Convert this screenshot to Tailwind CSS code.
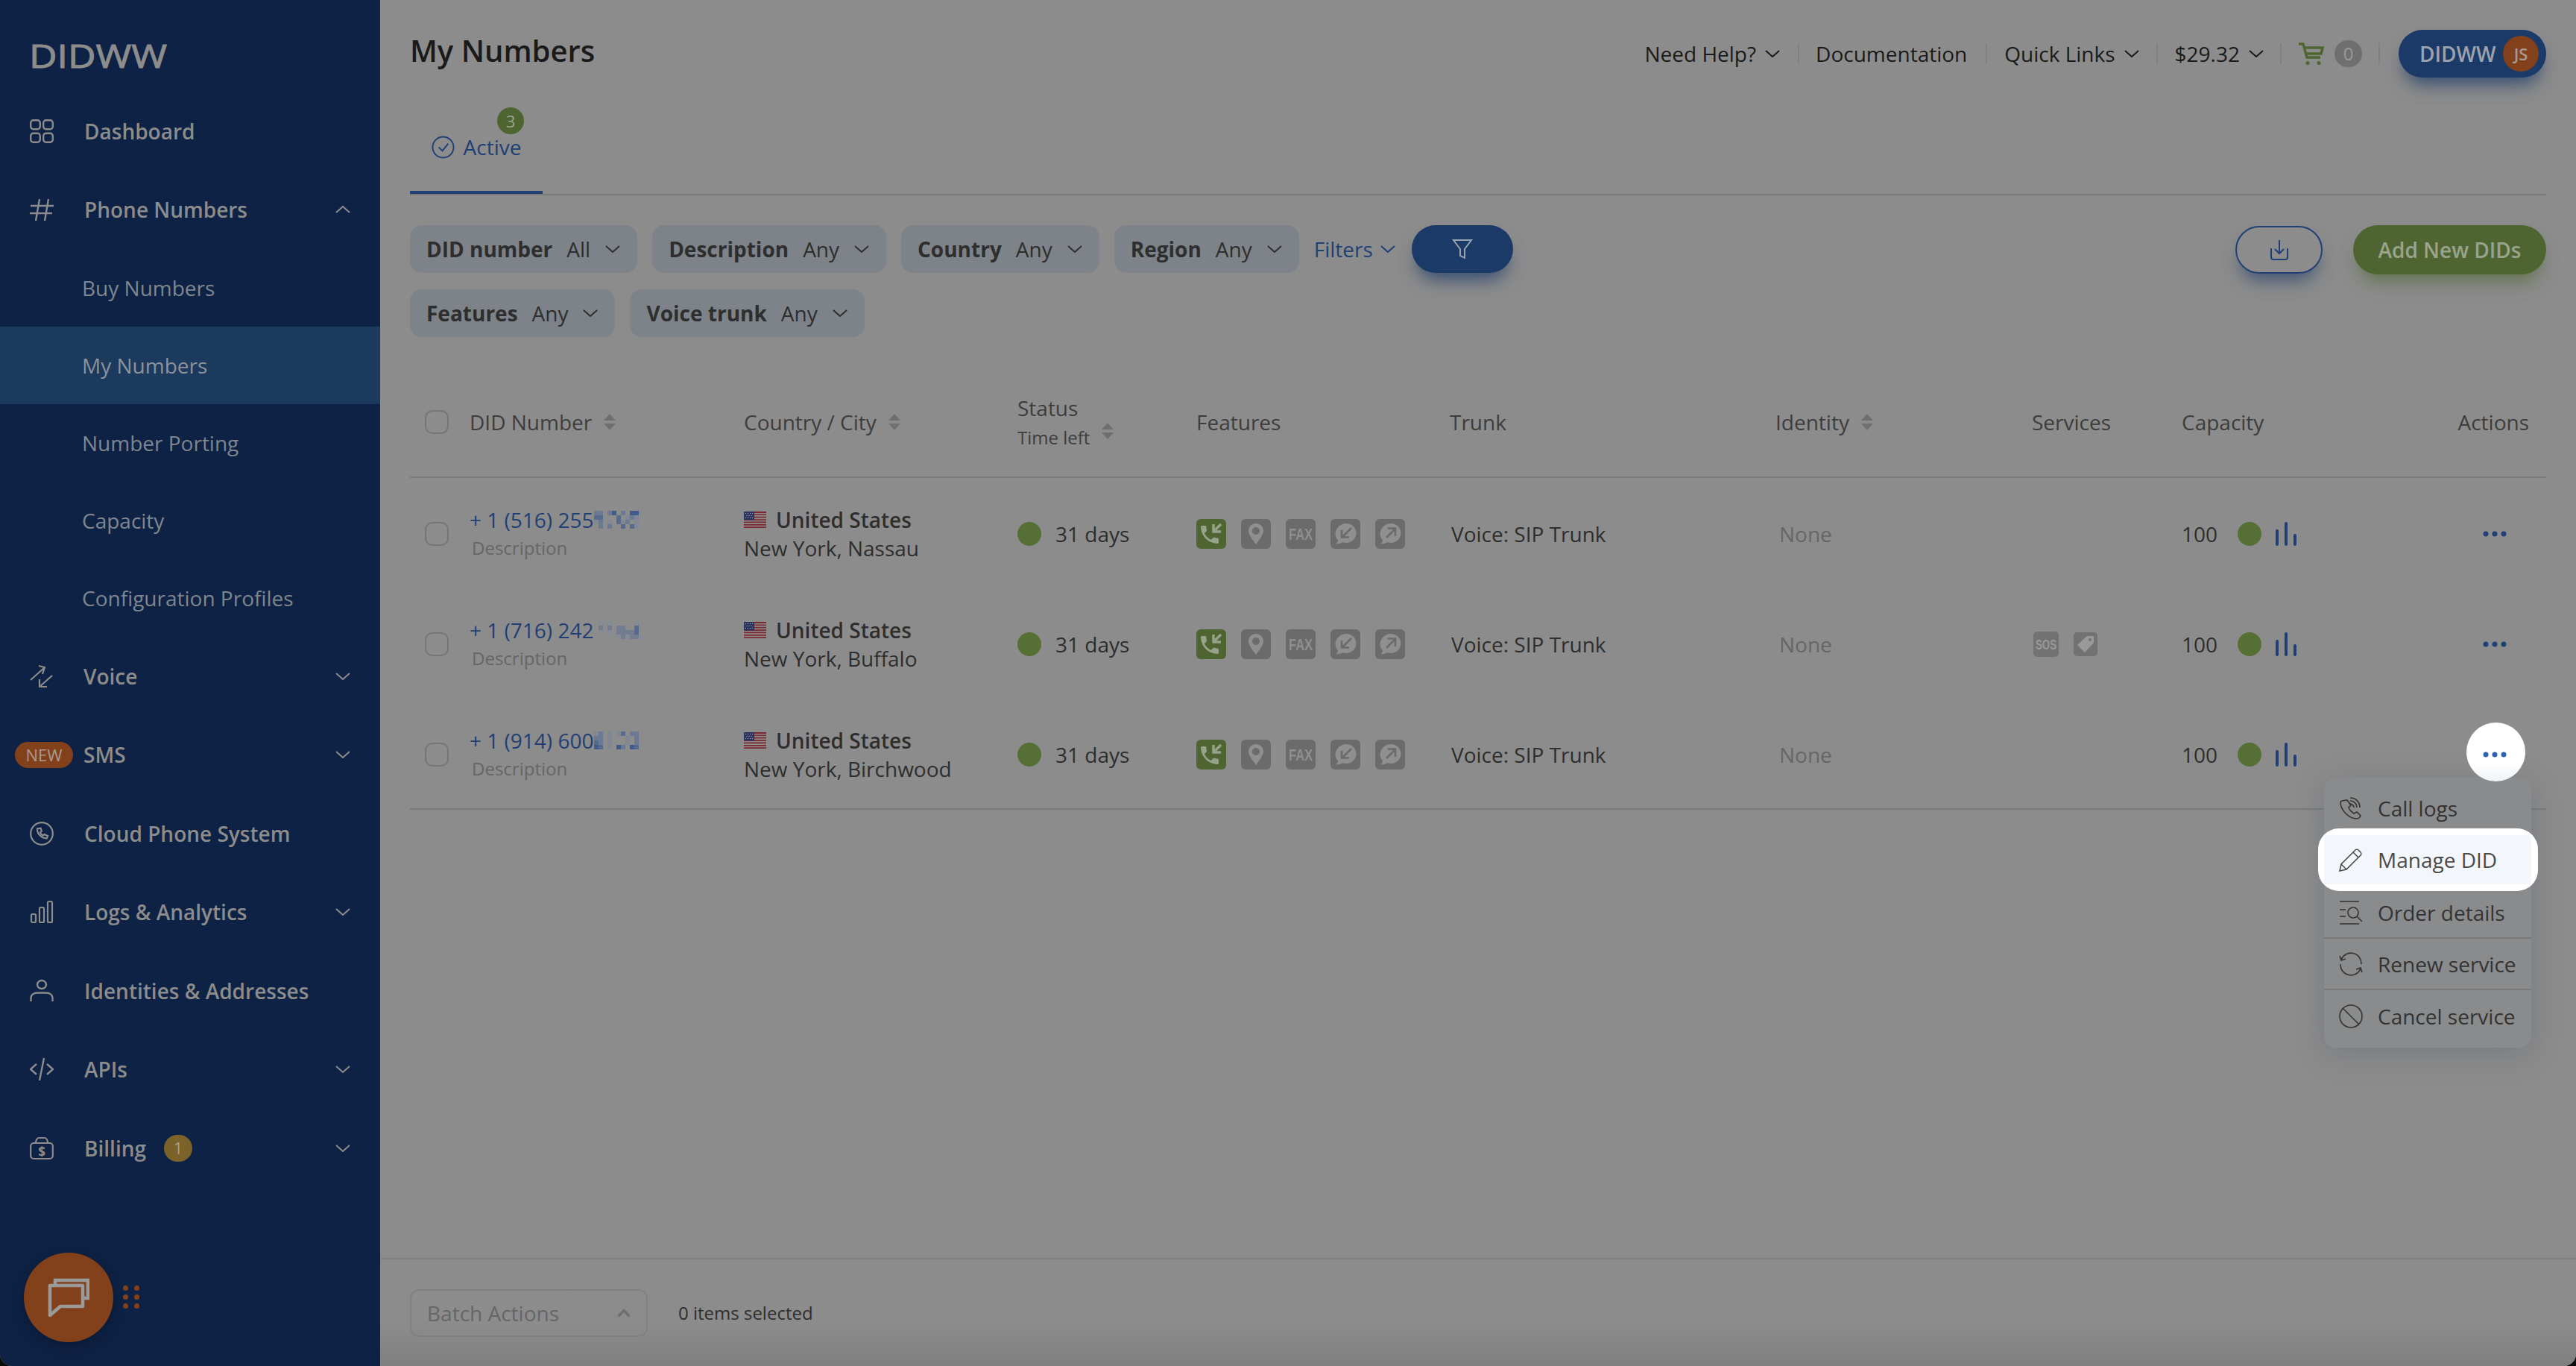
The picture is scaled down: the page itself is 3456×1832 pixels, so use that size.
<!DOCTYPE html>
<html lang="en">
<head>
  <meta charset="UTF-8" />
  <title>My Numbers</title>
  <script src="https://cdn.jsdelivr.net/npm/@tailwindcss/browser@4"></script>
</head>
<body class="bg-[#0a0a0a] font-['Open_Sans',sans-serif]">
  <!-- shared icons -->
  <svg class="hidden">
    <symbol id="chev-down" viewBox="0 0 20 10"><path d="M1 1l9 8 9-8" fill="none" stroke="currentColor" stroke-width="2"/></symbol>
    <symbol id="sort" viewBox="0 0 16 22"><path d="M8 0l8 9H0zM8 22l-8-9h16z" fill="#6f6f6f"/></symbol>
    <symbol id="flag" viewBox="0 0 30 22">
      <rect width="30" height="22" fill="#8c8c8c"/>
      <path d="M0 0h30v2H0zM0 3.4h30v1.7H0zM0 6.8h30v1.7H0zM0 10.2h30v1.7H0zM0 13.6h30v1.7H0zM0 17h30v1.7H0zM0 20.2h30V22H0z" fill="#7c2830"/>
      <rect width="14" height="11.5" fill="#2c3560"/>
      <path d="M2 2h1v1H2zM5 2h1v1H5zM8 2h1v1H8zM11 2h1v1h-1zM3.500 5h1v1h-1zM6.500 5h1v1h-1zM9.500 5h1v1h-1zM2 8h1v1H2zM5 8h1v1H5zM8 8h1v1H8zM11 8h1v1h-1z" fill="#b5b5b5"/>
    </symbol>
    <symbol id="f-call" viewBox="0 0 40 40">
      <rect width="40" height="40" rx="6" fill="#4f6531"/>
      <path transform="translate(2 5) scale(1.33)" d="M6.620 10.790c1.440 2.830 3.760 5.140 6.590 6.590l2.200-2.200c.27-.27.67-.36 1.020-.24 1.120.37 2.330.57 3.570.57.55 0 1 .45 1 1V20c0 .55-.45 1-1 1-9.390 0-17-7.610-17-17 0-.55.45-1 1-1h3.500c.55 0 1 .45 1 1 0 1.250.2 2.450.57 3.570.11.35.03.74-.25 1.020l-2.200 2.200z" fill="#98a28a"/>
      <path d="M33 7l-9 9M23 7v10h10" fill="none" stroke="#98a28a" stroke-width="3.400"/>
    </symbol>
    <symbol id="f-pin" viewBox="0 0 40 40">
      <rect width="40" height="40" rx="6" fill="#6b6b6b"/>
      <path d="M20 6c5.500 0 10 4.300 10 9.700 0 5.300-5.500 12-10 18.300-4.500-6.300-10-13-10-18.300C10 10.300 14.500 6 20 6z" fill="#8f8f8f"/>
      <circle cx="20" cy="16" r="5" fill="#6b6b6b"/>
    </symbol>
    <symbol id="f-fax" viewBox="0 0 40 40">
      <rect width="40" height="40" rx="6" fill="#6b6b6b"/>
      <text x="4" y="28" textLength="32" lengthAdjust="spacingAndGlyphs" font-family="Liberation Sans" font-weight="700" font-size="22" fill="#8f8f8f">FAX</text>
    </symbol>
    <symbol id="f-in" viewBox="0 0 40 40">
      <rect width="40" height="40" rx="6" fill="#6b6b6b"/>
      <path d="M21 6c7.500 0 13.500 5.700 13.500 13S28.500 32 21 32c-1.600 0-3.200-.3-4.700-.8-2.700 1.500-5.500 2.200-9.300 2.300 1.700-1.500 2.800-3.300 3.200-5.100-2.500-2.400-3.700-5.700-3.700-9.400C7.500 11.700 13.500 6 21 6z" fill="#8f8f8f"/>
      <path d="M28 12l-12 12M15 15v9.500h10" fill="none" stroke="#6b6b6b" stroke-width="2.600"/>
    </symbol>
    <symbol id="f-out" viewBox="0 0 40 40">
      <rect width="40" height="40" rx="6" fill="#6b6b6b"/>
      <path d="M21 6c7.500 0 13.500 5.700 13.500 13S28.500 32 21 32c-1.600 0-3.200-.3-4.700-.8-2.700 1.500-5.500 2.200-9.300 2.300 1.700-1.500 2.800-3.300 3.200-5.100-2.500-2.400-3.700-5.700-3.700-9.400C7.500 11.700 13.500 6 21 6z" fill="#8f8f8f"/>
      <path d="M15 25l12-12M16.500 12.500H27V23" fill="none" stroke="#6b6b6b" stroke-width="2.600"/>
    </symbol>
    <symbol id="bars" viewBox="0 0 28 32"><path d="M2 30V12M14 30V2M26 30V18" fill="none" stroke="#1f3f75" stroke-width="4" stroke-linecap="round"/></symbol>
    <symbol id="dots" viewBox="0 0 32 8"><circle cx="4" cy="4" r="3.500" fill="currentColor"/><circle cx="16" cy="4" r="3.500" fill="currentColor"/><circle cx="28" cy="4" r="3.500" fill="currentColor"/></symbol>
  </svg>

  <div class="relative flex w-[3456px] h-[1832px] overflow-hidden rounded-b-[16px] bg-[#8c8c8c]">
    <!-- sidebar -->
    <aside class="w-[510px] shrink-0 bg-[#0e2245] text-[#8c8c8c] text-[28px] font-semibold">
      <div class="h-[123px] pl-[39px] pt-[54px]">
        <svg class="overflow-visible" width="185" height="40" viewBox="0 0 185 40"><text x="0" y="37" textLength="185" lengthAdjust="spacingAndGlyphs" font-family="Open Sans" font-weight="400" font-size="44.500" fill="#8c8c8c" stroke="#8c8c8c" stroke-width="1">DIDWW</text></svg>
      </div>
      <a class="flex items-center h-[105px] pl-[40px] pr-[40px]">
        <svg class="w-[32px] h-[32px] mr-[41px]" viewBox="0 0 32 32" fill="none" stroke="currentColor" stroke-width="2.400"><rect x="1.200" y="1.200" width="12.600" height="12" rx="3.500"/><rect x="18.200" y="1.200" width="12.600" height="12" rx="3.500"/><rect x="1.200" y="18.800" width="12.600" height="12" rx="3.500"/><rect x="18.200" y="18.800" width="12.600" height="12" rx="3.500"/></svg>
        Dashboard
      </a>
      <a class="flex items-center h-[106px] pl-[40px] pr-[40px]">
        <svg class="w-[32px] h-[32px] mr-[41px]" viewBox="0 0 32 32" fill="none" stroke="currentColor" stroke-width="2.400"><path d="M1 11h31M0 21h30M13 2L8 31M25 2l-5 29"/></svg>
        Phone Numbers
        <svg class="ml-auto w-[20px] h-[10px] rotate-180"><use href="#chev-down"/></svg>
      </a>
      <div class="font-normal text-[#7f868f]">
        <a class="flex items-center h-[104px] pl-[110px]">Buy Numbers</a>
        <a class="flex items-center h-[104px] pl-[110px] bg-[#1c3a5e] text-[#8a929c]">My Numbers</a>
        <a class="flex items-center h-[104px] pl-[110px]">Number Porting</a>
        <a class="flex items-center h-[104px] pl-[110px]">Capacity</a>
        <a class="flex items-center h-[104px] pl-[110px]">Configuration Profiles</a>
      </div>
      <a class="flex items-center h-[105.500px] pl-[40px] pr-[40px]">
        <svg class="w-[32px] h-[32px] mr-[40px]" viewBox="0 0 32 32" fill="none" stroke="currentColor" stroke-width="2.200"><path d="M1 21L20 4M12 2l8 2-3 9M30 15L13 30M13 20v10h10"/></svg>
        Voice
        <svg class="ml-auto w-[20px] h-[10px]"><use href="#chev-down"/></svg>
      </a>
      <a class="flex items-center h-[105.500px] pl-[20px] pr-[40px]">
        <span class="w-[78px] h-[35px] mr-[14px] rounded-full bg-[#83411b] flex items-center justify-center text-[22px] text-[#a89a8e] font-normal">NEW</span>
        SMS
        <svg class="ml-auto w-[20px] h-[10px]"><use href="#chev-down"/></svg>
      </a>
      <a class="flex items-center h-[105.500px] pl-[40px] pr-[40px]">
        <svg class="w-[32px] h-[32px] mr-[41px]" viewBox="0 0 32 32" fill="none" stroke="currentColor" stroke-width="2.200"><circle cx="16" cy="16" r="14.800"/><path d="M10 9.500c-.5 6 5 12.500 12.500 13l1.500-3.500-4.500-2-2 1.500c-1.800-1-3-2.500-3.500-4.200l1.800-1.600-1.200-4z"/></svg>
        Cloud Phone System
      </a>
      <a class="flex items-center h-[105.500px] pl-[40px] pr-[40px]">
        <svg class="w-[32px] h-[32px] mr-[41px]" viewBox="0 0 32 32" fill="none" stroke="currentColor" stroke-width="2.200"><rect x="2" y="19" width="6" height="11" rx="1.500"/><rect x="13" y="10" width="6" height="20" rx="1.500"/><rect x="24" y="2" width="6" height="28" rx="1.500"/></svg>
        Logs &amp; Analytics
        <svg class="ml-auto w-[20px] h-[10px]"><use href="#chev-down"/></svg>
      </a>
      <a class="flex items-center h-[105.500px] pl-[40px] pr-[40px]">
        <svg class="w-[32px] h-[32px] mr-[41px]" viewBox="0 0 32 32" fill="none" stroke="currentColor" stroke-width="2.400"><ellipse cx="16" cy="7.500" rx="6" ry="5.500"/><path d="M1.500 30v-4c0-5 4-7.500 8.500-7.500h12c4.500 0 8.500 2.500 8.500 7.500v4"/></svg>
        Identities &amp; Addresses
      </a>
      <a class="flex items-center h-[105.500px] pl-[40px] pr-[40px]">
        <svg class="w-[32px] h-[32px] mr-[41px]" viewBox="0 0 32 32" fill="none" stroke="currentColor" stroke-width="2.400"><path d="M9 9l-8 7 8 7M23 9l8 7-8 7M19 1l-6 30"/></svg>
        APIs
        <svg class="ml-auto w-[20px] h-[10px]"><use href="#chev-down"/></svg>
      </a>
      <a class="flex items-center h-[105.500px] pl-[40px] pr-[40px]">
        <svg class="w-[32px] h-[32px] mr-[41px]" viewBox="0 0 32 32" fill="none" stroke="currentColor" stroke-width="2.200"><rect x="1.200" y="9" width="29.600" height="21" rx="4"/><path d="M8 9c0-4 2-7 4-7h8c2 0 4 3 4 7"/><text x="16" y="27" text-anchor="middle" font-size="17" font-weight="700" fill="currentColor" stroke="none">$</text></svg>
        Billing
        <span class="ml-[24px] w-[38px] h-[36px] rounded-full bg-[#7a6228] flex items-center justify-center text-[22px] text-[#a89e84] font-normal">1</span>
        <svg class="ml-auto w-[20px] h-[10px]"><use href="#chev-down"/></svg>
      </a>
    </aside>

    <!-- main -->
    <main class="flex-1 flex flex-col min-w-0">
      <div class="px-[40px]">
        <header class="flex items-center h-[64px] mt-[40px] text-[28px] text-[#1a1a1a]">
          <h1 class="text-[40px] font-semibold leading-none -mt-[8px]">My Numbers</h1>
          <div class="ml-auto flex items-center">
            <span class="flex items-center gap-[12px]">Need Help?<svg class="w-[20px] h-[10px]"><use href="#chev-down"/></svg></span>
            <span class="w-[2px] h-[28px] bg-[#808080] ml-[24px] mr-[22px]"></span>
            <span>Documentation</span>
            <span class="w-[2px] h-[28px] bg-[#808080] ml-[25px] mr-[23px]"></span>
            <span class="flex items-center gap-[12px]">Quick Links<svg class="w-[20px] h-[10px]"><use href="#chev-down"/></svg></span>
            <span class="w-[2px] h-[28px] bg-[#808080] mx-[23px]"></span>
            <span class="flex items-center gap-[12px]">$29.32<svg class="w-[20px] h-[10px]"><use href="#chev-down"/></svg></span>
            <span class="w-[2px] h-[28px] bg-[#808080] mx-[22px]"></span>
            <svg class="w-[36px] h-[32px]" viewBox="0 0 36 32" fill="none" stroke="#4f6531" stroke-width="3.500"><path d="M1 3h6l5 18h18M8 8h25l-2 8H11"/><circle cx="13" cy="28.500" r="2.500" fill="#4f6531" stroke="none"/><circle cx="28" cy="28.500" r="2.500" fill="#4f6531" stroke="none"/></svg>
            <span class="ml-[13px] w-[37px] h-[36px] rounded-full bg-[#6f6f6f] flex items-center justify-center text-[24px] text-[#9a9a9a]">0</span>
            <span class="w-[2px] h-[28px] bg-[#808080] ml-[22px] mr-[25px]"></span>
            <span class="w-[198px] h-[64px] rounded-full bg-[#1b3a68] shadow-[0_16px_24px_-8px_rgba(27,58,104,0.8)] flex items-center pl-[28px] pr-[10px] font-semibold text-[#9ba3ae]">
              DIDWW
              <span class="ml-auto w-[48px] h-[48px] rounded-full bg-[#83411b] flex items-center justify-center text-[22px] text-[#a89a8e] font-semibold">JS</span>
            </span>
          </div>
        </header>

        <div class="mt-[38px] border-b-2 border-[#7b7b7b]">
          <div class="relative w-[178px] h-[118px] pt-[34px] border-b-4 border-[#1f3f75] flex justify-center gap-[12px] text-[28px] text-[#1f3f75]">
            <svg class="w-[31px] h-[31px] mt-[6px]" viewBox="0 0 32 32" fill="none" stroke="currentColor" stroke-width="2"><circle cx="16" cy="16" r="14.500"/><path d="M10 16l5 5 8-10"/></svg>
            Active
            <span class="absolute left-[117px] top-[2px] w-[36px] h-[36px] rounded-full bg-[#4f6531] flex items-center justify-center text-[22px] text-[#9aa38c]">3</span>
          </div>
        </div>

        <!-- filters -->
        <div class="mt-[40px] flex items-start justify-between text-[28px]">
          <div class="flex flex-col gap-[22px]">
            <div class="flex items-center gap-[20px]">
              <span class="flex items-center h-[64px] pl-[22px] pr-[23px] rounded-[16px] bg-[#7d8388] text-[#2e2e2e]"><b class="font-bold mr-[19px]">DID number</b>All<svg class="ml-[20px] w-[20px] h-[10px]"><use href="#chev-down"/></svg></span>
              <span class="flex items-center h-[64px] pl-[22px] pr-[23px] rounded-[16px] bg-[#7d8388] text-[#2e2e2e]"><b class="font-bold mr-[19px]">Description</b>Any<svg class="ml-[20px] w-[20px] h-[10px]"><use href="#chev-down"/></svg></span>
              <span class="flex items-center h-[64px] pl-[22px] pr-[23px] rounded-[16px] bg-[#7d8388] text-[#2e2e2e]"><b class="font-bold mr-[19px]">Country</b>Any<svg class="ml-[20px] w-[20px] h-[10px]"><use href="#chev-down"/></svg></span>
              <span class="flex items-center h-[64px] pl-[22px] pr-[23px] rounded-[16px] bg-[#7d8388] text-[#2e2e2e]"><b class="font-bold mr-[19px]">Region</b>Any<svg class="ml-[20px] w-[20px] h-[10px]"><use href="#chev-down"/></svg></span>
              <span class="flex items-center gap-[10px] text-[#1f3f75]">Filters<svg class="w-[20px] h-[10px]"><use href="#chev-down"/></svg></span>
              <span class="ml-[2px] w-[136px] h-[64px] rounded-full bg-[#1b3a68] shadow-[0_16px_24px_-8px_rgba(27,58,104,0.8)] flex items-center justify-center">
                <svg class="w-[28px] h-[28px]" viewBox="0 0 28 28" fill="none" stroke="#9ba3ae" stroke-width="2"><path d="M2 2h24L17 14v12l-6-3v-9z"/></svg>
              </span>
            </div>
            <div class="flex items-center gap-[20px]">
              <span class="flex items-center h-[64px] pl-[22px] pr-[23px] rounded-[16px] bg-[#7d8388] text-[#2e2e2e]"><b class="font-bold mr-[19px]">Features</b>Any<svg class="ml-[20px] w-[20px] h-[10px]"><use href="#chev-down"/></svg></span>
              <span class="flex items-center h-[64px] pl-[22px] pr-[23px] rounded-[16px] bg-[#7d8388] text-[#2e2e2e]"><b class="font-bold mr-[19px]">Voice trunk</b>Any<svg class="ml-[20px] w-[20px] h-[10px]"><use href="#chev-down"/></svg></span>
            </div>
          </div>
          <div class="flex items-center gap-[41px]">
            <span class="w-[117px] h-[64px] rounded-full border-2 border-[#1f3f75] shadow-[0_16px_24px_-8px_rgba(27,58,104,0.7)] flex items-center justify-center">
              <svg class="w-[28px] h-[28px]" viewBox="0 0 28 28" fill="none" stroke="#1f3f75" stroke-width="2"><path d="M14 1v18M8 13l6 6 6-6M3 12v12c0 2 1 3 3 3h16c2 0 3-1 3-3V12"/></svg>
            </span>
            <span class="w-[259px] h-[66px] rounded-full bg-[#4f6531] shadow-[0_16px_24px_-8px_rgba(79,101,49,0.7)] flex items-center justify-center font-semibold text-[#9aa38c]">Add New DIDs</span>
          </div>
        </div>

        <!-- table -->
        <div class="mt-[41px] text-[28px] text-[#2e2e2e]">
          <div class="grid grid-cols-[80px_368px_367px_240px_340px_437px_344px_201px_200px_1fr] items-center h-[148px] border-b-2 border-[#7b7b7b] text-[#3d3d3d]">
            <span class="ml-[20px] w-[32px] h-[32px] rounded-[10px] border-2 border-[#757575]"></span>
            <span class="flex items-center gap-[16px]">DID Number<svg class="w-[16px] h-[22px]"><use href="#sort"/></svg></span>
            <span class="flex items-center gap-[16px]">Country / City<svg class="w-[16px] h-[22px]"><use href="#sort"/></svg></span>
            <span class="flex items-center gap-[16px]"><span class="flex flex-col"><span class="leading-[38px]">Status</span><span class="text-[24px] leading-[34px] mt-[4px]">Time left</span></span><svg class="w-[16px] h-[22px] mt-[24px]"><use href="#sort"/></svg></span>
            <span>Features</span>
            <span>Trunk</span>
            <span class="flex items-center gap-[16px]">Identity<svg class="w-[16px] h-[22px]"><use href="#sort"/></svg></span>
            <span>Services</span>
            <span>Capacity</span>
            <span class="justify-self-end pr-[23px]">Actions</span>
          </div>

          <div class="grid grid-cols-[80px_368px_367px_240px_340px_437px_344px_201px_200px_1fr] items-center h-[148px] pt-[2px]">
            <span class="ml-[20px] w-[32px] h-[32px] rounded-[10px] border-2 border-[#757575]"></span>
            <span class="flex flex-col leading-[38px]">
              <span class="flex items-center text-[#1f3f75]">+ 1 (516) 255<svg class="w-[60px] h-[24px] ml-[1px]" viewBox="0 0 10 4" shape-rendering="crispEdges"><path d="M0 0h2v1H0zM3 0h1v1H3zM6 0h1v1H6zM8 1h1v1H8zM1 2h1v1H1zM7 2h1v1H7zM1 3h1v1H1zM3 3h1v1H3z" fill="#6b7a92"/><path d="M0 1h2v1H0zM5 1h1v2H5zM6 3h1v1H6zM8 3h1v1H8z" fill="#566a8c"/><path d="M4 0h1v1H4zM8 0h2v1H8z" fill="#3f5c8c"/><path d="M7 1h1v1H7zM9 1h1v1H9zM0 2h1v1H0zM3 2h1v1H3zM6 2h1v1H6zM9 2h1v2H9z" fill="#828893"/></svg></span>
              <span class="text-[24px] text-[#666] pl-[3px]">Description</span>
            </span>
            <span class="flex flex-col leading-[38px]">
              <span class="flex items-center font-semibold"><svg class="w-[30px] h-[22px] mr-[13px]"><use href="#flag"/></svg>United States</span>
              <span>New York, Nassau</span>
            </span>
            <span class="flex items-center gap-[19px]"><i class="w-[32px] h-[32px] rounded-full bg-[#556f34]"></i>31 days</span>
            <span class="flex gap-[20px]"><svg class="w-[40px] h-[40px]"><use href="#f-call"/></svg><svg class="w-[40px] h-[40px]"><use href="#f-pin"/></svg><svg class="w-[40px] h-[40px]"><use href="#f-fax"/></svg><svg class="w-[40px] h-[40px]"><use href="#f-in"/></svg><svg class="w-[40px] h-[40px]"><use href="#f-out"/></svg></span>
            <span class="pl-[2px]">Voice: SIP Trunk</span>
            <span class="pl-[5px] text-[#666]">None</span>
            <span></span>
            <span class="flex items-center">100<i class="ml-[27px] w-[32px] h-[32px] rounded-full bg-[#556f34]"></i><svg class="ml-[19px] w-[28px] h-[32px]"><use href="#bars"/></svg></span>
            <span class="justify-self-end pr-[53px] text-[#1f3f75]"><svg class="w-[32px] h-[8px]"><use href="#dots"/></svg></span>
          </div>

          <div class="grid grid-cols-[80px_368px_367px_240px_340px_437px_344px_201px_200px_1fr] items-center h-[148px] pt-[2px]">
            <span class="ml-[20px] w-[32px] h-[32px] rounded-[10px] border-2 border-[#757575]"></span>
            <span class="flex flex-col leading-[38px]">
              <span class="flex items-center text-[#1f3f75]">+ 1 (716) 242<svg class="w-[66px] h-[24px] ml-[1px]" viewBox="0 0 11 4" shape-rendering="crispEdges"><path d="M1 0h1v1H1zM3 0h1v1H3zM9 0h1v1H9zM1 2h1v1H1zM3 2h1v1H3zM5 3h1v1H5zM7 3h1v1H7zM10 3h1v1h-1z" fill="#858a95"/><path d="M1 1h1v1H1zM3 1h1v1H3zM5 1h2v1H5zM5 2h3v1H5zM6 3h1v1H6zM8 2h1v1H8zM8 3h2v1H8z" fill="#727d92"/><path d="M9 1h1v2H9z" fill="#566a8c"/></svg></span>
              <span class="text-[24px] text-[#666] pl-[3px]">Description</span>
            </span>
            <span class="flex flex-col leading-[38px]">
              <span class="flex items-center font-semibold"><svg class="w-[30px] h-[22px] mr-[13px]"><use href="#flag"/></svg>United States</span>
              <span>New York, Buffalo</span>
            </span>
            <span class="flex items-center gap-[19px]"><i class="w-[32px] h-[32px] rounded-full bg-[#556f34]"></i>31 days</span>
            <span class="flex gap-[20px]"><svg class="w-[40px] h-[40px]"><use href="#f-call"/></svg><svg class="w-[40px] h-[40px]"><use href="#f-pin"/></svg><svg class="w-[40px] h-[40px]"><use href="#f-fax"/></svg><svg class="w-[40px] h-[40px]"><use href="#f-in"/></svg><svg class="w-[40px] h-[40px]"><use href="#f-out"/></svg></span>
            <span class="pl-[2px]">Voice: SIP Trunk</span>
            <span class="pl-[5px] text-[#666]">None</span>
            <span class="flex items-center gap-[20px] pl-[2px]">
              <svg class="w-[34px] h-[34px]" viewBox="0 0 34 34"><rect width="34" height="34" rx="5" fill="#727272"/><text x="3" y="24" textLength="28" lengthAdjust="spacingAndGlyphs" font-family="Liberation Sans" font-weight="700" font-size="19" fill="#999">SOS</text></svg>
              <svg class="w-[32px] h-[32px]" viewBox="0 0 32 32"><rect width="32" height="32" rx="5" fill="#727272"/><path d="M18 5h8a1 1 0 0 1 1 1v8L15 27 5 17z" fill="#999"/><circle cx="22" cy="10" r="2" fill="#727272"/></svg>
            </span>
            <span class="flex items-center">100<i class="ml-[27px] w-[32px] h-[32px] rounded-full bg-[#556f34]"></i><svg class="ml-[19px] w-[28px] h-[32px]"><use href="#bars"/></svg></span>
            <span class="justify-self-end pr-[53px] text-[#1f3f75]"><svg class="w-[32px] h-[8px]"><use href="#dots"/></svg></span>
          </div>

          <div class="grid grid-cols-[80px_368px_367px_240px_340px_437px_344px_201px_200px_1fr] items-center h-[149px] pt-[2px] border-b-2 border-[#7b7b7b]">
            <span class="ml-[20px] w-[32px] h-[32px] rounded-[10px] border-2 border-[#757575]"></span>
            <span class="flex flex-col leading-[38px]">
              <span class="flex items-center text-[#1f3f75]">+ 1 (914) 600<svg class="w-[60px] h-[24px] ml-[1px]" viewBox="0 0 10 4" shape-rendering="crispEdges"><path d="M0 0h1v1H0zM3 0h1v4H3zM5 0h1v1H5zM7 1h1v2H7z" fill="#828893"/><path d="M1 0h1v3H1zM8 0h2v1H8zM0 1h1v1H0zM9 1h1v2H9zM6 3h1v1H6z" fill="#6b7a92"/><path d="M6 0h1v1H6zM0 2h1v1H0zM1 3h1v1H1zM9 3h1v1H9z" fill="#566a8c"/><path d="M0 3h1v1H0zM5 3h1v1H5zM8 3h1v1H8z" fill="#3f5c8c"/></svg></span>
              <span class="text-[24px] text-[#666] pl-[3px]">Description</span>
            </span>
            <span class="flex flex-col leading-[38px]">
              <span class="flex items-center font-semibold"><svg class="w-[30px] h-[22px] mr-[13px]"><use href="#flag"/></svg>United States</span>
              <span>New York, Birchwood</span>
            </span>
            <span class="flex items-center gap-[19px]"><i class="w-[32px] h-[32px] rounded-full bg-[#556f34]"></i>31 days</span>
            <span class="flex gap-[20px]"><svg class="w-[40px] h-[40px]"><use href="#f-call"/></svg><svg class="w-[40px] h-[40px]"><use href="#f-pin"/></svg><svg class="w-[40px] h-[40px]"><use href="#f-fax"/></svg><svg class="w-[40px] h-[40px]"><use href="#f-in"/></svg><svg class="w-[40px] h-[40px]"><use href="#f-out"/></svg></span>
            <span class="pl-[2px]">Voice: SIP Trunk</span>
            <span class="pl-[5px] text-[#666]">None</span>
            <span></span>
            <span class="flex items-center">100<i class="ml-[27px] w-[32px] h-[32px] rounded-full bg-[#556f34]"></i><svg class="ml-[19px] w-[28px] h-[32px]"><use href="#bars"/></svg></span>
            <span></span>
          </div>
        </div>
      </div>

      <!-- batch bar -->
      <footer class="mt-auto h-[145px] border-t-2 border-[#808080] px-[40px] flex items-center gap-[41px] bg-gradient-to-b from-[#8c8c8c] from-60% to-[#7f7f7f]">
        <span class="w-[319px] h-[64px] rounded-[12px] border-2 border-[#808080] flex items-center justify-between pl-[21px] pr-[21px] text-[28px] text-[#666]">
          Batch Actions
          <svg class="w-[18px] h-[12px]" viewBox="0 0 18 12" fill="none" stroke="#6f6f6f" stroke-width="3.500"><path d="M1.500 10.500L9 2.500l7.500 8"/></svg>
        </span>
        <span class="text-[24px] text-[#2e2e2e]">0 items selected</span>
      </footer>
    </main>

    <!-- chat launcher -->
    <div class="absolute left-[32px] top-[1680px] w-[120px] h-[120px] rounded-full bg-[#83411b] shadow-[0_6px_20px_rgba(0,0,0,0.25)] flex items-center justify-center">
      <svg class="w-[56px] h-[52px]" viewBox="0 0 56 52" fill="none" stroke="#9a9a9a" stroke-width="4.500"><path d="M10 8V3h44v24h-5"/><path d="M3 10h44v28H17L3 50z" stroke-linejoin="round"/></svg>
    </div>
    <div class="absolute left-[165px] top-[1724px] grid grid-cols-2 gap-x-[8px] gap-y-[5px]">
      <i class="w-[7px] h-[7px] rounded-full bg-[#83411b]"></i><i class="w-[7px] h-[7px] rounded-full bg-[#83411b]"></i>
      <i class="w-[7px] h-[7px] rounded-full bg-[#83411b]"></i><i class="w-[7px] h-[7px] rounded-full bg-[#83411b]"></i>
      <i class="w-[7px] h-[7px] rounded-full bg-[#83411b]"></i><i class="w-[7px] h-[7px] rounded-full bg-[#83411b]"></i>
    </div>

    <!-- actions menu -->
    <div class="absolute left-[3118px] top-[1043px] w-[278px] h-[362px] rounded-[16px] bg-[#8a8b8c] shadow-[0_8px_40px_rgba(60,70,90,0.25)] flex flex-col pt-[6px] text-[28px] text-[#333]">
      <div class="flex items-center h-[70px] pl-[20px] gap-[20px]">
        <svg class="w-[32px] h-[32px]" viewBox="0 0 32 32" fill="none" stroke="#333" stroke-width="1.600"><path d="M2 8c0 10 11 22 22 22 2 0 4-2 5-4l-5-5-4 2c-3-2-6-5-7-8l3-3-5-7c-3 0-9 1-9 3z"/><path d="M15 6c5 0 9 4 9 9M15 2c8 0 13 6 13 13M15 10c2 0 5 2 5 5"/></svg>
        Call logs
      </div>
      <div class="h-[71px]"></div>
      <div class="flex items-center h-[69px] pl-[20px] gap-[20px] border-b-2 border-[#787878]">
        <svg class="w-[32px] h-[32px]" viewBox="0 0 32 32" fill="none" stroke="#333" stroke-width="1.600"><path d="M1 1h26M1 31h26M1 12h8M1 21h8"/><circle cx="19" cy="16" r="7"/><path d="M24 21l7 7"/></svg>
        Order details
      </div>
      <div class="flex items-center h-[69px] pl-[20px] gap-[20px] border-b-2 border-[#787878]">
        <svg class="w-[32px] h-[32px]" viewBox="0 0 32 32" fill="none" stroke="#333" stroke-width="1.600"><path d="M3 10A14 14 0 0 1 30 16M29 22A14 14 0 0 1 2 16M1 5l2 6 6-2M31 27l-2-6-6 2"/></svg>
        Renew service
      </div>
      <div class="flex items-center h-[70px] pl-[20px] gap-[20px]">
        <svg class="w-[32px] h-[32px]" viewBox="0 0 32 32" fill="none" stroke="#333" stroke-width="1.600"><circle cx="16" cy="16" r="15"/><path d="M5.500 5.500l21 21"/></svg>
        Cancel service
      </div>
    </div>

    <!-- spotlighted elements -->
    <div class="absolute left-[3309px] top-[969px] w-[79px] h-[79px] rounded-full bg-gradient-to-b from-white from-70% to-[#f0f2f5] flex items-center justify-center pr-[3px] pt-[7px] text-[#2f62b3]">
      <svg class="w-[32px] h-[8px]"><use href="#dots"/></svg>
    </div>
    <div class="absolute left-[3110px] top-[1111px] w-[295px] h-[84px] rounded-[28px] bg-white overflow-hidden flex items-center">
      <div class="ml-[8px] w-[278px] h-[66px] bg-[#f3f6fb] flex items-center pl-[20px] gap-[20px] text-[28px] text-[#4a4a4a]">
        <svg class="w-[32px] h-[32px]" viewBox="0 0 32 32" fill="none" stroke="#4a4a4a" stroke-width="1.600"><path d="M1 31l2-9L22 3c1-1 3-1 4 0l3 3c1 1 1 3 0 4L10 29zM3 22l7 7M19 6l7 7"/></svg>
        Manage DID
      </div>
    </div>
  </div>
</body>
</html>
